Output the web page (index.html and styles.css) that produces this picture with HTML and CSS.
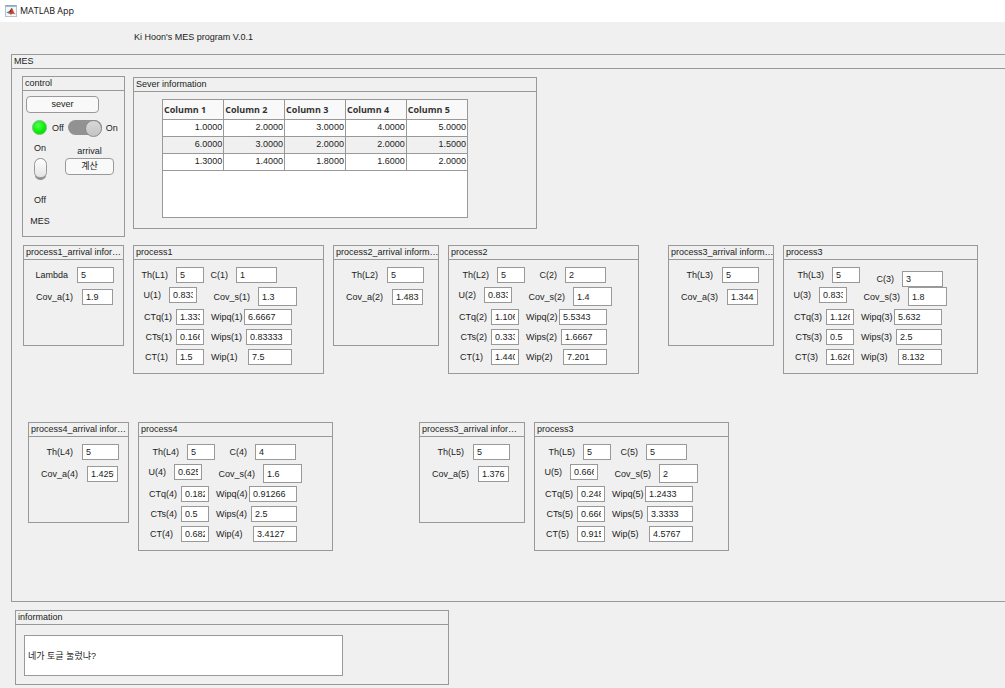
FILE: index.html
```html
<!DOCTYPE html>
<html lang="en">
<head>
<meta charset="utf-8">
<title>MATLAB App</title>
<link rel="stylesheet" href="styles.css">
</head>
<body>
<header class="titlebar">
  <svg class="app-icon" viewBox="0 0 12 12" aria-hidden="true">
    <rect x="0.5" y="0.5" width="11" height="11" fill="#f4f6f8" stroke="#b4c3ce"/>
    <path d="M0.5 1h11" stroke="#6fa3c8" stroke-width="1.4"/>
    <path d="M1.4 7.4L4.4 6L5.6 7.6L4 8.8Z" fill="#5b7f96"/>
    <path d="M4.2 6.2Q5.6 5 6.4 2.8L7.4 5.5L5.6 8.4Z" fill="#5e241c"/>
    <path d="M6.4 2.8Q7.6 3 8.4 6T10.8 9.2Q8.8 8.4 7.6 8.8T5.8 10Q5.4 8.6 4 8.8Q6 7.4 6.4 2.8Z" fill="#c4452a"/>
  </svg>
  <span>MATLAB App</span>
</header>

<main>
  <h1 class="app-title">Ki Hoon's MES program V.0.1</h1>

  <section class="panel mes">
    <h2 class="panel-title">MES</h2>
    <div class="mes-body">
      <div class="top-row">
        <section class="panel control">
          <h3 class="panel-title">control</h3>
          <div class="control-body">
            <button class="btn btn-wide" type="button">sever</button>
            <div class="switch-row">
              <span class="lamp"></span>
              <label for="power">Off</label>
              <input class="slider" id="power" type="checkbox" role="switch" checked>
              <label for="power">On</label>
            </div>
            <div class="control-columns">
              <div class="rocker-column">
                <label for="mes-switch">On</label>
                <input class="rocker" id="mes-switch" type="checkbox" role="switch" checked>
                <label for="mes-switch">Off</label>
                <span>MES</span>
              </div>
              <div class="arrival-column">
                <span>arrival</span>
                <button class="btn" type="button">계산</button>
              </div>
            </div>
          </div>
        </section>

        <section class="panel server">
          <h3 class="panel-title">Sever information</h3>
          <div class="table-box">
            <table>
              <thead>
                <tr><th>Column 1</th><th>Column 2</th><th>Column 3</th><th>Column 4</th><th>Column 5</th></tr>
              </thead>
              <tbody>
                <tr><td>1.0000</td><td>2.0000</td><td>3.0000</td><td>4.0000</td><td>5.0000</td></tr>
                <tr><td>6.0000</td><td>3.0000</td><td>2.0000</td><td>2.0000</td><td>1.5000</td></tr>
                <tr><td>1.3000</td><td>1.4000</td><td>1.8000</td><td>1.6000</td><td>2.0000</td></tr>
              </tbody>
            </table>
          </div>
        </section>
      </div>

      <div class="stations">
        <div class="station">
          <section class="panel arrival narrow">
            <h3 class="panel-title">process1_arrival infor…</h3>
            <div class="arrival-body">
              <label class="field">Lambda<input class="w-36" value="5"></label>
              <label class="field cov">Cov_a(1)<input class="w-31" value="1.9"></label>
            </div>
          </section>
          <section class="panel process first">
            <h3 class="panel-title">process1</h3>
            <div class="process-body">
              <label class="field th">Th(L1)<input class="w-27" value="5"></label>
              <label class="field c">C(1)<input class="w-41" value="1"></label>
              <label class="field u">U(1)<input class="w-27" value="0.83333"></label>
              <label class="field cov-s">Cov_s(1)<input class="w-39 tall" value="1.3"></label>
              <label class="field ct tight">CTq(1)<input class="w-27" value="1.3333"></label>
              <label class="field wip">Wipq(1)<input class="w-47" value="6.6667"></label>
              <label class="field ct tight">CTs(1)<input class="w-27" value="0.16667"></label>
              <label class="field wip">Wips(1)<input class="w-45" value="0.83333"></label>
              <label class="field ct">CT(1)<input class="w-27" value="1.5"></label>
              <label class="field wip">Wip(1)<input class="w-43" value="7.5"></label>
            </div>
          </section>
        </div>

        <div class="station">
          <section class="panel arrival">
            <h3 class="panel-title">process2_arrival inform…</h3>
            <div class="arrival-body">
              <label class="field">Th(L2)<input class="w-36" value="5"></label>
              <label class="field cov">Cov_a(2)<input class="w-31" value="1.4833"></label>
            </div>
          </section>
          <section class="panel process">
            <h3 class="panel-title">process2</h3>
            <div class="process-body">
              <label class="field th">Th(L2)<input class="w-27" value="5"></label>
              <label class="field c">C(2)<input class="w-41" value="2"></label>
              <label class="field u">U(2)<input class="w-27" value="0.83333"></label>
              <label class="field cov-s">Cov_s(2)<input class="w-39 tall" value="1.4"></label>
              <label class="field ct tight">CTq(2)<input class="w-27" value="1.1069"></label>
              <label class="field wip">Wipq(2)<input class="w-47" value="5.5343"></label>
              <label class="field ct tight">CTs(2)<input class="w-27" value="0.33333"></label>
              <label class="field wip">Wips(2)<input class="w-45" value="1.6667"></label>
              <label class="field ct">CT(1)<input class="w-27" value="1.4402"></label>
              <label class="field wip">Wip(2)<input class="w-43" value="7.201"></label>
            </div>
          </section>
        </div>

        <div class="station">
          <section class="panel arrival">
            <h3 class="panel-title">process3_arrival inform…</h3>
            <div class="arrival-body">
              <label class="field">Th(L3)<input class="w-36" value="5"></label>
              <label class="field cov">Cov_a(3)<input class="w-31" value="1.3441"></label>
            </div>
          </section>
          <section class="panel process wide">
            <h3 class="panel-title">process3</h3>
            <div class="process-body">
              <label class="field th">Th(L3)<input class="w-27" value="5"></label>
              <label class="field c low">C(3)<input class="w-41" value="3"></label>
              <label class="field u">U(3)<input class="w-27" value="0.83333"></label>
              <label class="field cov-s">Cov_s(3)<input class="w-39 tall" value="1.8"></label>
              <label class="field ct tight">CTq(3)<input class="w-27" value="1.1264"></label>
              <label class="field wip">Wipq(3)<input class="w-47" value="5.632"></label>
              <label class="field ct tight">CTs(3)<input class="w-27" value="0.5"></label>
              <label class="field wip">Wips(3)<input class="w-45" value="2.5"></label>
              <label class="field ct">CT(3)<input class="w-27" value="1.6264"></label>
              <label class="field wip">Wip(3)<input class="w-43" value="8.132"></label>
            </div>
          </section>
        </div>
      </div>

      <div class="stations second">
        <div class="station">
          <section class="panel arrival narrow">
            <h3 class="panel-title">process4_arrival infor…</h3>
            <div class="arrival-body">
              <label class="field">Th(L4)<input class="w-36" value="5"></label>
              <label class="field cov">Cov_a(4)<input class="w-31" value="1.4259"></label>
            </div>
          </section>
          <section class="panel process wide">
            <h3 class="panel-title">process4</h3>
            <div class="process-body">
              <label class="field th">Th(L4)<input class="w-27" value="5"></label>
              <label class="field c">C(4)<input class="w-41" value="4"></label>
              <label class="field u">U(4)<input class="w-27" value="0.625"></label>
              <label class="field cov-s">Cov_s(4)<input class="w-39 tall" value="1.6"></label>
              <label class="field ct tight">CTq(4)<input class="w-27" value="0.18253"></label>
              <label class="field wip">Wipq(4)<input class="w-47" value="0.91266"></label>
              <label class="field ct tight">CTs(4)<input class="w-27" value="0.5"></label>
              <label class="field wip">Wips(4)<input class="w-45" value="2.5"></label>
              <label class="field ct">CT(4)<input class="w-27" value="0.68253"></label>
              <label class="field wip">Wip(4)<input class="w-43" value="3.4127"></label>
            </div>
          </section>
        </div>

        <div class="station">
          <section class="panel arrival">
            <h3 class="panel-title">process3_arrival infor…</h3>
            <div class="arrival-body">
              <label class="field">Th(L5)<input class="w-36" value="5"></label>
              <label class="field cov">Cov_a(5)<input class="w-31" value="1.3767"></label>
            </div>
          </section>
          <section class="panel process wide">
            <h3 class="panel-title">process3</h3>
            <div class="process-body">
              <label class="field th">Th(L5)<input class="w-27" value="5"></label>
              <label class="field c mid">C(5)<input class="w-41" value="5"></label>
              <label class="field u">U(5)<input class="w-27" value="0.66667"></label>
              <label class="field cov-s">Cov_s(5)<input class="w-39 tall" value="2"></label>
              <label class="field ct tight">CTq(5)<input class="w-27" value="0.24867"></label>
              <label class="field wip">Wipq(5)<input class="w-47" value="1.2433"></label>
              <label class="field ct tight">CTs(5)<input class="w-27" value="0.66667"></label>
              <label class="field wip">Wips(5)<input class="w-45" value="3.3333"></label>
              <label class="field ct">CT(5)<input class="w-27" value="0.91533"></label>
              <label class="field wip">Wip(5)<input class="w-43" value="4.5767"></label>
            </div>
          </section>
        </div>
      </div>
    </div>
  </section>

  <section class="panel information">
    <h2 class="panel-title">information</h2>
    <div class="information-body">
      <input class="message" aria-label="information" value="네가 토글 눌렀냐?">
    </div>
  </section>
</main>
</body>
</html>
```
FILE: styles.css
```css
* {
  box-sizing: border-box;
}

body {
  margin: 0;
  min-height: 100vh;
  background: #f0f0f0;
  color: #222;
  font: 9px/12px "Liberation Sans", Arial, "Noto Sans CJK KR", sans-serif;
}

input,
button {
  font: inherit;
  color: inherit;
}

.titlebar {
  display: flex;
  align-items: center;
  gap: 3px;
  height: 22px;
  padding-left: 5px;
  background: #fff;
  color: #111;
  font: 9px/12px "Open Sans", "Noto Sans", sans-serif;
}

.app-icon {
  width: 12px;
  height: 12px;
}

.app-title {
  margin: 0;
  padding: 9px 0 11px 134px;
  font-size: 9px;
  font-weight: 400;
}

/* Panels */
.panel {
  border: 1px solid #999;
}

.panel-title {
  margin: 0;
  padding-left: 2px;
  height: 14px;
  border-bottom: 1px solid #999;
  font-size: 9px;
  line-height: 13px;
  font-weight: 400;
  white-space: nowrap;
}

.mes {
  margin-left: 11px;
  border-right: 0;
}

.mes-body {
  padding: 7px 0 50px 10px;
}

.top-row {
  display: flex;
  align-items: flex-start;
  gap: 8px;
}

/* Control panel */
.control {
  width: 103px;
}

.control-body {
  padding: 5px 3px 9px;
}

.btn {
  display: block;
  height: 17px;
  padding: 0;
  border: 1px solid #999;
  border-radius: 4px;
  background: #f9f9f9;
  line-height: 15px;
}

.btn-wide {
  width: 73px;
}

.switch-row {
  display: flex;
  align-items: center;
  gap: 4px;
  margin-top: 7px;
  padding-left: 6px;
}

.lamp {
  width: 15px;
  height: 15px;
  margin-right: 1px;
  border: 1px solid #7ab87a;
  border-radius: 50%;
  background: radial-gradient(circle at 40% 35%, #5f5 0, #0e0 60%, #0c0 100%);
}

.slider {
  appearance: none;
  display: flex;
  justify-content: flex-end;
  width: 34px;
  height: 15px;
  margin: 0;
  border-radius: 8px;
  background: #929292;
}

.slider::before {
  content: "";
  width: 15px;
  height: 15px;
  border: 1px solid #8a8a8a;
  border-radius: 50%;
  background: linear-gradient(#d8d8d8, #c4c4c4);
}

.control-columns {
  display: flex;
  gap: 16px;
  padding: 7px 0 0 5px;
}

.rocker-column {
  display: flex;
  flex-direction: column;
  align-items: center;
  width: 18px;
}

.rocker {
  appearance: none;
  width: 13px;
  height: 22px;
  margin: 4px 0 14px;
  border-radius: 7px;
  background: linear-gradient(#bbb 60%, #888) center / 11px 22px no-repeat;
}

.rocker::before {
  content: "";
  display: block;
  height: 18px;
  border: 1px solid #999;
  border-radius: 7px 7px 6px 6px;
  background: linear-gradient(#fff, #e4e4e4);
}

.rocker-column span {
  margin-top: 9px;
}

.arrival-column {
  display: flex;
  flex-direction: column;
  align-items: center;
  padding-top: 3px;
}

.arrival-column .btn {
  width: 49px;
  margin-top: 1px;
}

/* Server table */
.server {
  width: 404px;
  margin-top: 1px;
}

.table-box {
  width: 306px;
  height: 119px;
  margin: 7px 0 10px 28px;
  border: 1px solid #999;
  background: #fff;
}

table {
  width: 100%;
  border-collapse: collapse;
  table-layout: fixed;
}

th,
td {
  height: 17px;
  padding: 0 1px;
  border-right: 1px solid #999;
  border-bottom: 1px solid #999;
  line-height: 15px;
}

th:last-child,
td:last-child {
  border-right: 0;
}

th {
  height: 19px;
  padding-top: 2px;
  background: #f9f9f9;
  color: #333;
  font: 700 9px/12px "Open Sans", "Noto Sans", sans-serif;
  text-align: left;
}

td {
  text-align: right;
}

tbody tr:nth-child(even) {
  background: #f0f0f0;
}

/* Stations */
.stations {
  display: flex;
  gap: 9px;
  margin-top: 8px;
  padding-left: 1px;
}

.stations.second {
  gap: 86px;
  margin-top: 48px;
  padding-left: 6px;
}

.stations:not(.second) .station:last-child {
  margin-left: 20px;
}

.station {
  display: flex;
  align-items: flex-start;
  gap: 9px;
}

.arrival {
  width: 106px;
  height: 101px;
}

.arrival.narrow {
  width: 101px;
}

.process {
  width: 191px;
}

.process.wide {
  width: 195px;
}

.field {
  display: flex;
  align-items: center;
  justify-content: flex-end;
  gap: 8px;
  white-space: nowrap;
}

.field.tight {
  gap: 4px;
}

.field input {
  height: 16px;
  padding: 0 3px;
  border: 1px solid #999;
  border-radius: 0;
  background: #fff;
}

.field input.tall {
  height: 19px;
}

.w-27 { width: 28px; }
.w-31 { width: 31px; }
.w-36 { width: 37px; }
.w-39 { width: 39px; }
.w-41 { width: 41px; }
.w-43 { width: 44px; }
.w-45 { width: 46px; }
.w-47 { width: 48px; }

.arrival-body {
  display: flex;
  flex-direction: column;
  gap: 6px;
  width: 90px;
  padding-top: 7px;
}

.arrival-body .field {
  gap: 9px;
}

.arrival-body .cov {
  padding-right: 1px;
}

.process-body {
  display: grid;
  grid-template-columns: 76px 89px;
  grid-template-rows: 20px 22px 20px 20px 16px;
  align-items: start;
  padding: 7px 0 8px;
}

.u {
  margin-right: 13px;
}

.ct,
.first .th {
  margin-right: 6px;
}

.c {
  margin-right: 8px;
}

.cov-s {
  margin-right: 2px;
}

.c.mid {
  margin-right: 13px;
}

.first .c {
  margin-right: 22px;
}

.c.low {
  align-self: end;
  margin-right: 6px;
}

.wip {
  justify-content: space-between;
  gap: 0;
  margin: 0 7px 0 1px;
}

/* Information panel */
.information {
  width: 434px;
  max-width: 100%;
  margin: 8px 0 0 15px;
}

.information-body {
  padding: 10px 8px 8px;
}

.message {
  width: 319px;
  height: 41px;
  padding: 0 3px;
  border: 1px solid #999;
  background: #fff;
}
```
